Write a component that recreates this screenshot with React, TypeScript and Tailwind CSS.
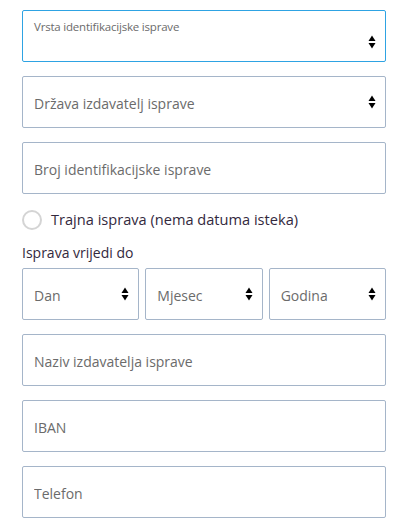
import React from "react";

const font = { fontFamily: '"Open Sans", "Liberation Sans", sans-serif' };

function Arrows() {
  return (
    <svg width="8" height="14" viewBox="0 0 8 14" className="shrink-0">
      <path d="M4 0.5 L7.5 6 L0.5 6 Z" fill="#000" />
      <path d="M4 13.5 L7.5 8 L0.5 8 Z" fill="#000" />
    </svg>
  );
}

function Field({ label, select }: { label: string; select?: boolean }) {
  return (
    <div className="h-[52px] rounded-[2px] border border-[#a5b5c9] bg-white flex items-center pl-[11px] pr-[9px]">
      <span className="flex-1 pt-[3px] text-[14px] text-[#6b6b6b] truncate">{label}</span>
      {select && <Arrows />}
    </div>
  );
}

export default function App() {
  return (
    <div className="w-[407px] h-[530px] bg-white pl-[22px] pr-[21px] pt-[10px]" style={font}>
      <div className="flex flex-col gap-[14px]">
        {/* focused select with floating label */}
        <div className="h-[52px] rounded-[2px] border border-[#2ea3e3] bg-white relative flex items-center pl-[11px] pr-[9px]">
          <span className="absolute left-[11px] top-[7px] text-[11.5px] tracking-[-0.2px] text-[#6b6b6b]">
            Vrsta identifikacijske isprave
          </span>
          <span className="flex-1" />
          <span className="mt-[12px]"><Arrows /></span>
        </div>
        <Field label="Država izdavatelj isprave" select />
        <Field label="Broj identifikacijske isprave" />
      </div>

      <label className="flex items-center gap-[9px] mt-[15px]">
        <span className="w-[20px] h-[20px] rounded-full border-2 border-[#d4d4d4] bg-white" />
        <span className="text-[14.6px] text-[#33293d]">Trajna isprava (nema datuma isteka)</span>
      </label>

      <div className="mt-[12px] text-[14px] text-[#33293d] leading-[20px]">Isprava vrijedi do</div>

      <div className="grid grid-cols-3 gap-[6px] mt-[5px]">
        <Field label="Dan" select />
        <Field label="Mjesec" select />
        <Field label="Godina" select />
      </div>

      <div className="flex flex-col gap-[14px] mt-[14px]">
        <Field label="Naziv izdavatelja isprave" />
        <Field label="IBAN" />
        <Field label="Telefon" />
      </div>
    </div>
  );
}
